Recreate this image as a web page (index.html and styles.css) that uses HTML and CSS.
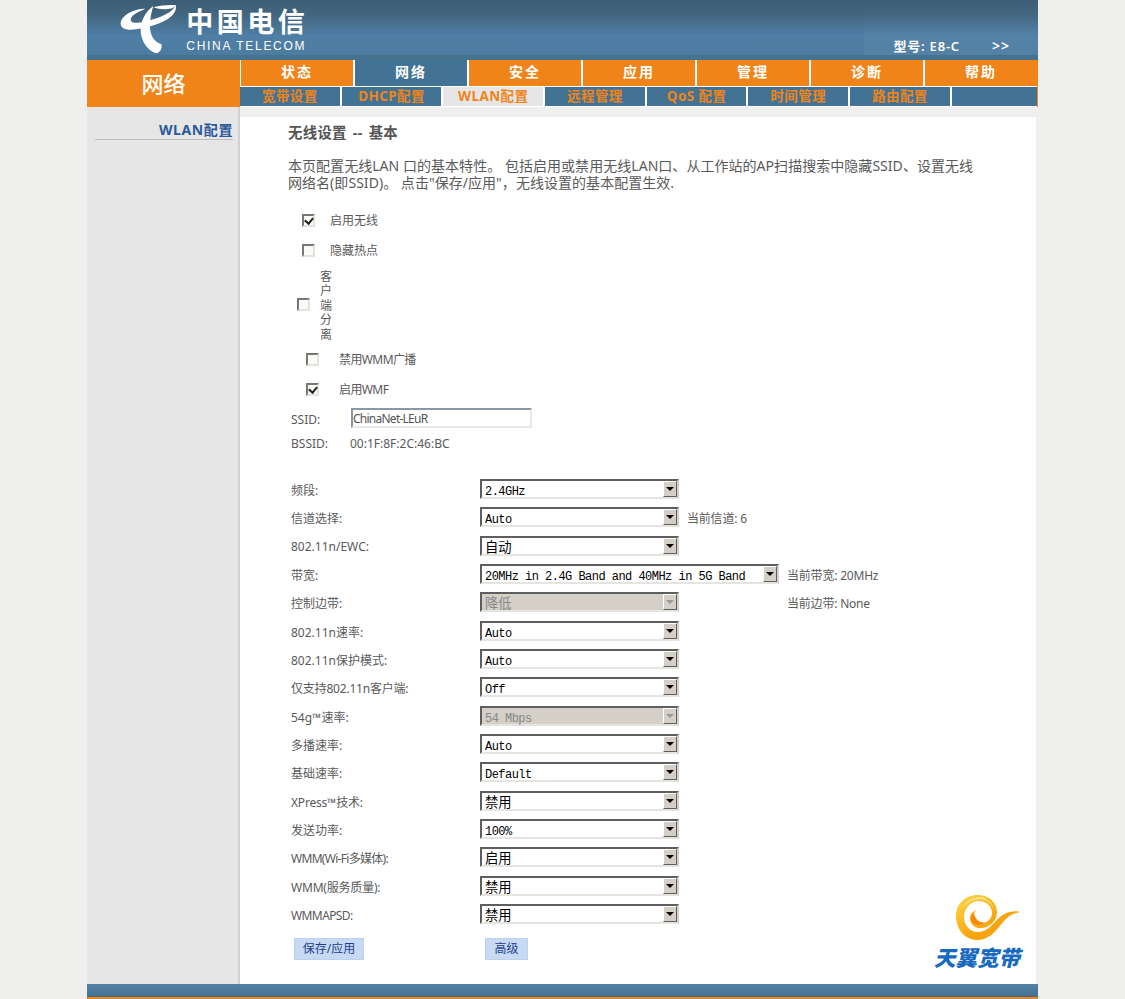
FILE: index.html
```html
<!DOCTYPE html>
<html lang="zh-CN">
<head>
<meta charset="utf-8">
<title>无线设置 -- 基本</title>
<link rel="stylesheet" href="styles.css">
</head>
<body>
<div class="page">
  <header class="top">
    <div class="brand">
      <svg class="brand-mark" viewBox="28 12 172 150" aria-hidden="true">
        <path fill="#fff" d="M104 26C72 26 32 44 30 70C29 88 52 92 76 88C112 82 150 72 176 54C190 44 198 30 196 16C188 30 172 42 150 50C122 60 90 70 70 68C56 66 58 52 70 44C80 36 92 32 104 26Z"/>
        <path fill="#fff" d="M128 18C106 34 90 60 90 90C90 124 112 152 136 160C148 158 156 146 152 132C134 128 118 108 118 80C118 58 122 36 128 18Z"/>
        <path fill="#fff" d="M128 22C150 16 180 14 196 16C190 26 176 28 160 28C150 28 138 26 128 22Z"/>
      </svg>
      <div class="brand-text">
        <div class="brand-cn">中国电信</div>
        <div class="brand-en">CHINA TELECOM</div>
      </div>
    </div>
    <div class="model"><span>型号: E8-C</span><span class="more">&gt;&gt;</span></div>
  </header>

  <div class="navband">
    <div class="section-name">网络</div>
    <nav class="navs">
      <ul class="nav-main">
        <li>状态</li><li class="on">网络</li><li>安全</li><li>应用</li><li>管理</li><li>诊断</li><li>帮助</li>
      </ul>
      <ul class="nav-sub">
        <li>宽带设置</li><li>DHCP配置</li><li class="on">WLAN配置</li><li>远程管理</li><li>QoS 配置</li><li>时间管理</li><li>路由配置</li><li></li>
      </ul>
    </nav>
  </div>

  <div class="body">
    <aside class="side">
      <div class="side-item">WLAN配置</div>
    </aside>
    <main class="main">
      <div class="sheet">
        <h1 class="title">无线设置 -- 基本</h1>
        <p class="intro">本页配置无线LAN 口的基本特性。 包括启用或禁用无线LAN口、从工作站的AP扫描搜索中隐藏SSID、设置无线<br>网络名(即SSID)。 点击"保存/应用"，无线设置的基本配置生效.</p>

        <label class="check c1"><input type="checkbox" checked><span>启用无线</span></label>
        <label class="check c1"><input type="checkbox"><span>隐藏热点</span></label>
        <label class="check c2"><input type="checkbox"><span class="narrow">客户端分离</span></label>
        <label class="check c3"><input type="checkbox"><span class="tight">禁用WMM广播</span></label>
        <label class="check c3"><input type="checkbox" checked><span class="tight">启用WMF</span></label>

        <div class="id-row ssid"><span class="id-label">SSID:</span><input class="text" type="text" value="ChinaNet-LEuR"></div>
        <div class="id-row bssid"><span class="id-label">BSSID:</span><span>00:1F:8F:2C:46:BC</span></div>

        <div class="form">
          <div class="row"><span class="lab">频段:</span><div class="val"><div class="sel"><select><option>2.4GHz</option></select><span class="arrow"></span></div></div></div>
          <div class="row"><span class="lab">信道选择:</span><div class="val"><div class="sel"><select><option>Auto</option></select><span class="arrow"></span></div><span class="note">当前信道: 6</span></div></div>
          <div class="row"><span class="lab">802.11n/EWC:</span><div class="val"><div class="sel"><select class="cjk"><option>自动</option></select><span class="arrow"></span></div></div></div>
          <div class="row"><span class="lab">带宽:</span><div class="val"><div class="sel wide"><select><option>20MHz in 2.4G Band and 40MHz in 5G Band</option></select><span class="arrow"></span></div><span class="note">当前带宽: 20MHz</span></div></div>
          <div class="row"><span class="lab">控制边带:</span><div class="val"><div class="sel off"><select class="cjk" disabled><option>降低</option></select><span class="arrow"></span></div><span class="note far">当前边带: None</span></div></div>
          <div class="row"><span class="lab">802.11n速率:</span><div class="val"><div class="sel"><select><option>Auto</option></select><span class="arrow"></span></div></div></div>
          <div class="row"><span class="lab">802.11n保护模式:</span><div class="val"><div class="sel"><select><option>Auto</option></select><span class="arrow"></span></div></div></div>
          <div class="row"><span class="lab slim">仅支持802.11n客户端:</span><div class="val"><div class="sel"><select><option>Off</option></select><span class="arrow"></span></div></div></div>
          <div class="row"><span class="lab">54g™速率:</span><div class="val"><div class="sel off"><select disabled><option>54 Mbps</option></select><span class="arrow"></span></div></div></div>
          <div class="row"><span class="lab">多播速率:</span><div class="val"><div class="sel"><select><option>Auto</option></select><span class="arrow"></span></div></div></div>
          <div class="row"><span class="lab">基础速率:</span><div class="val"><div class="sel"><select><option>Default</option></select><span class="arrow"></span></div></div></div>
          <div class="row"><span class="lab slim">XPress™技术:</span><div class="val"><div class="sel"><select class="cjk"><option>禁用</option></select><span class="arrow"></span></div></div></div>
          <div class="row"><span class="lab">发送功率:</span><div class="val"><div class="sel"><select><option>100%</option></select><span class="arrow"></span></div></div></div>
          <div class="row"><span class="lab tighter">WMM(Wi-Fi多媒体):</span><div class="val"><div class="sel"><select class="cjk"><option>启用</option></select><span class="arrow"></span></div></div></div>
          <div class="row"><span class="lab slim">WMM(服务质量):</span><div class="val"><div class="sel"><select class="cjk"><option>禁用</option></select><span class="arrow"></span></div></div></div>
          <div class="row"><span class="lab tight">WMMAPSD:</span><div class="val"><div class="sel"><select class="cjk"><option>禁用</option></select><span class="arrow"></span></div></div></div>
        </div>

        <div class="actions">
          <button class="btn save" type="button">保存/应用</button>
          <button class="btn adv" type="button">高级</button>
        </div>

        <div class="tianyi">
          <svg class="swirl" viewBox="0 0 70 50" aria-hidden="true">
            <defs>
              <linearGradient id="gold" x1="0" y1="0" x2="1" y2="1">
                <stop offset="0" stop-color="#ffd64a"/>
                <stop offset=".55" stop-color="#f7a70f"/>
                <stop offset="1" stop-color="#f59a0c"/>
              </linearGradient>
            </defs>
            <path fill="url(#gold)" d="M25 1C11 1 3 11 3 22C3 37 14 47 26 46C38 45 45 34 51 27C56 21 62 19 67 18C60 16 53 18 47 23C41 28 36 37 26 38C17 39 11 31 11 23C11 14 18 7 26 7C33 7 39 12 39 19C39 25 34 29 29 29C25 29 21 26 21 22C21 19 22 18 23 16C18 18 16 22 17 26C18 31 23 35 29 34C37 33 44 27 44 18C44 8 35 1 25 1Z"/>
            <path fill="#ffe98a" d="M27 3C33 3 40 9 41 16C39 9 33 5 27 5C20 5 13 9 9 15C12 8 19 3 27 3Z"/>
            <path fill="#f6860c" d="M21 19C22 25 26 29 31 28C28 32 22 32 19 28C17 25 18 21 21 19Z"/>
          </svg>
          <div class="tianyi-text">天翼宽带</div>
        </div>
      </div>
    </main>
  </div>

  <footer class="foot"></footer>
</div>
</body>
</html>
```

FILE: styles.css
```css
* { box-sizing: border-box; }
html, body { margin: 0; padding: 0; height: 999px; overflow: hidden; background: #eff0ee; }
body { font-family: "Noto Sans", "Noto Sans CJK SC", sans-serif; font-size: 12px; color: #5a5a5a; }
ul { list-style: none; margin: 0; padding: 0; }
.page { width: 951px; height: 999px; margin: 0 auto; display: flex; flex-direction: column; }

.top {
  height: 60px; flex: none; display: flex; justify-content: space-between; align-items: flex-start;
  border-bottom: 5px solid #44728f;
  background:
    linear-gradient(rgba(255,255,255,0), rgba(255,255,255,.04)) right top / 174px 100% no-repeat,
    linear-gradient(#3e5f75 0, #42657e 14px, #4f7fa6 36px, #4d7ca1 55px);
}
.brand { display: flex; margin-left: 33px; padding-top: 4px; }
.brand-mark { width: 57.3px; height: 50px; margin-right: 9px; }
.brand-text { color: #fff; padding-top: 2px; }
.brand-cn { font-family: "Noto Sans CJK SC", sans-serif; font-weight: 700; font-size: 27px; line-height: 29px; letter-spacing: 3.5px; white-space: nowrap; }
.brand-en { font-family: "Liberation Sans", sans-serif; font-size: 12px; line-height: 13px; letter-spacing: 1.7px; margin-top: 5px; white-space: nowrap; }
.model { display: flex; margin: 37px 28px 0 0; color: #fff; font-size: 13px; line-height: 18px; font-weight: 600; letter-spacing: .8px; }
.more { margin-left: 32px; font-size: 14px; letter-spacing: 1px; }

.navband { height: 47px; flex: none; display: flex; background: #f08418; }
.section-name { width: 153px; color: #fff; font: 500 22px/44px "Noto Sans CJK SC", sans-serif; text-align: center; }
.navs { flex: 1; background: #fff; margin-right: 1px; padding-left: 1px; }
.nav-main { display: flex; height: 26px; background: #f08418; }
.nav-main li {
  flex: 1 1 0; color: #fff; text-align: center; font: 700 14px/23px "Noto Sans CJK SC", sans-serif; letter-spacing: 2px;
  border-right: 2px solid #fff;
}
.nav-main li:last-child { border-right: 0; }
.nav-main li.on { background: #427394; }
.nav-sub { display: flex; height: 19px; margin: 1px 0 1px -1px; background: #427394; }
.nav-sub li {
  flex: 0 0 101.7px; color: #f08418; text-align: center; font: 700 13.5px/19px "Noto Sans", "Noto Sans CJK SC", sans-serif; letter-spacing: .4px;
  border-right: 2px solid #fff;
}
.nav-sub li:last-child { border-right: 0; flex: 1 1 0; }
.nav-sub li.on { background: #e6e6e6; }

.body { flex: 1; display: flex; min-height: 0; }
.side { width: 153px; flex: none; background: #e6e6e6; padding: 10px 6px 0 8px; border-right: 2px solid #d2d2d2; }
.side-item {
  height: 23px; text-align: right; color: #2a5a9a; font: 700 14px/26px "Noto Sans", "Noto Sans CJK SC", sans-serif; letter-spacing: .6px;
  border-bottom: 1px solid #bdbdbd; margin-right: -1px;
}
.main { flex: 1; padding: 10px 2px 0 0; }
.sheet { position: relative; height: 100%; background: #fff; padding-left: 48px; }

.title { margin: 0; padding-top: 6px; height: 40px; font: 700 14.4px/20px "Noto Sans", "Noto Sans CJK SC", sans-serif; letter-spacing: .3px; word-spacing: 2px; color: #555; }
.intro { margin: 0 0 13.5px; font-size: 14px; letter-spacing: .04px; line-height: 17px; height: 34.5px; white-space: nowrap; }

.check { display: flex; align-items: center; height: 30px; }
.check.c1 { padding-left: 14px; }
.check.c2 { padding-left: 9px; height: 79px; }
.check.c3 { padding-left: 18px; height: 30px; }
.check input {
  appearance: none; margin: 0 15px 0 0; width: 13px; height: 13px; position: relative; background: #fafaf7;
  border: 2px solid; border-color: #777 #e4e2dc #e4e2dc #777;
}
.check.c2 input { margin-right: 10px; }
.check.c3 input { margin-right: 20px; }
.check input:checked::before {
  content: ""; position: absolute; left: 2px; top: 0; width: 4px; height: 6px;
  border: solid #222; border-width: 0 2px 2px 0; transform: rotate(40deg);
}
.narrow { width: 12px; padding-top: 3px; line-height: 14.5px; word-break: break-all; }
.tight { letter-spacing: -.6px; }
.tighter { letter-spacing: -.7px; }
.slim { letter-spacing: -.2px; }

.id-row { display: flex; align-items: center; padding-left: 3px; }
.id-label { width: 60px; padding-top: 2px; }
.ssid { height: 28px; }
.bssid { height: 23px; margin-bottom: 20px; }
.bssid .id-label { width: 59px; padding-top: 0; }
.text {
  width: 181px; height: 20px; padding: 0; font: 12px "Noto Sans", sans-serif; letter-spacing: -.75px; color: #555; background: #fff;
  border: 2px solid; border-color: #8a97a6 #e8e8e4 #e8e8e4 #8a97a6; outline: 0;
}

.form { padding-left: 3px; }
.row { display: grid; grid-template-columns: 189px 1fr; align-items: center; height: 28.33px; }
.lab, .note { padding-top: 2px; }
.note { letter-spacing: -.2px; }
.val { display: flex; align-items: center; gap: 8px; }
.far { margin-left: 100px; }
.sel {
  width: 199px; height: 20px; display: flex; background: #fff;
  border: 2px solid; border-color: #5e5e5e #d4d0c8 #e6e4de #5e5e5e;
}
.sel.wide { width: 299px; }
.sel select {
  appearance: none; flex: 1; min-width: 0; height: 20px; margin: -2px 0; border: 0; outline: 0; background: transparent; padding: 6px 0 0 3px;
  font: 12px "Liberation Mono", monospace; letter-spacing: -.53px; color: #000; opacity: 1;
}
.sel select.cjk { font: 13.3px "Noto Sans CJK SC", sans-serif; letter-spacing: 0; padding-top: 1px; }
.arrow {
  width: 14px; flex: none; display: flex; align-items: center; justify-content: center; background: #d4d0c8;
  border: 1px solid; border-color: #fff #5e5e5e #5e5e5e #fff;
}
.arrow::before { content: ""; border: solid transparent; border-width: 4px 4px 0; border-top-color: #000; }
.sel.off { background: #d4d0c8; }
.sel.off select { color: #888; }
.sel.off .arrow::before { border-top-color: #999; }

.actions { display: flex; padding: 10px 0 0 6px; }
.btn {
  height: 22px; padding: 0; background: #c8d9f3; border: 1px solid #bcd0ef; color: #1d3f8c;
  font: 12px/20px "Noto Sans", "Noto Sans CJK SC", sans-serif;
}
.save { width: 70px; }
.adv { width: 43px; margin-left: 121px; }

.tianyi { position: absolute; right: 14px; bottom: 14px; width: 90px; text-align: center; }
.swirl { display: block; width: 70px; height: 50px; margin: 0 0 0 21px; }
.tianyi-text { color: #1869c0; font: italic 900 21.5px/26px "Noto Sans CJK SC", sans-serif; white-space: nowrap; }

.foot { height: 15px; flex: none; background: linear-gradient(#5382a6, #42718f); border-bottom: 2px solid #f08418; }
```
